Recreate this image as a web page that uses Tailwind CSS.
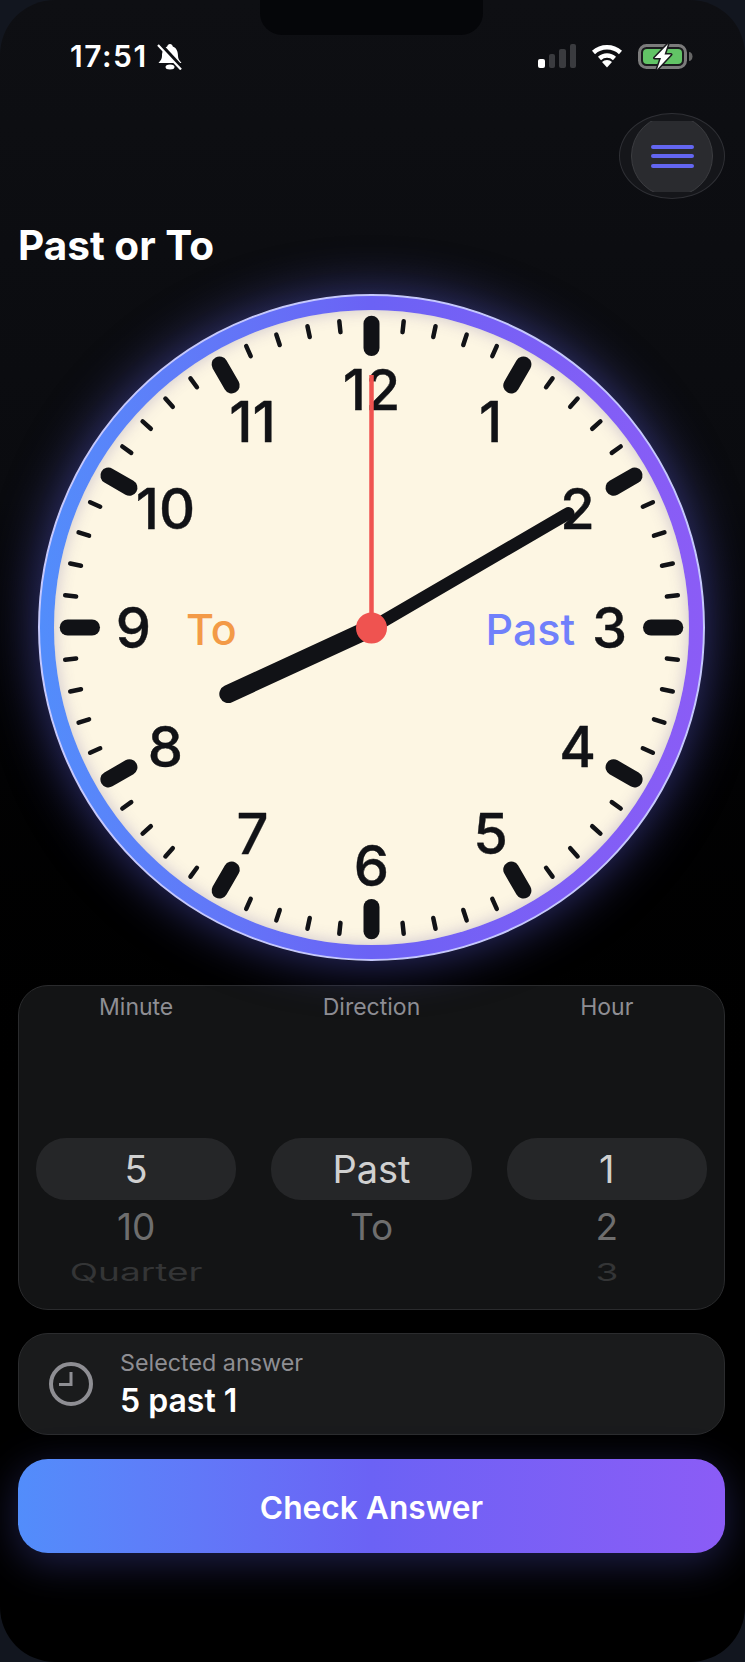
<!DOCTYPE html>
<html lang="en">
<head>
    <meta charset="UTF-8">
    <meta name="viewport" content="width=device-width, initial-scale=1.0">
    <title>Past or To</title>
    <script src="https://cdn.jsdelivr.net/npm/@tailwindcss/browser@4"></script>
</head>
<body class="bg-[#12161f] font-[Inter,sans-serif]">
    <div class="relative w-[745px] h-[1662px] overflow-hidden rounded-[55px] bg-linear-to-b from-[#0e0f13] via-[#0a0b0f] via-30% to-black to-70% pl-[18px] pr-[20px]">
        <!-- Notch -->
        <div class="absolute left-[260px] top-0 w-[223px] h-[35px] rounded-b-[22px] bg-[#050609]"></div>

        <!-- Status bar -->
        <div class="flex justify-between items-center h-[28px] mt-[42px] pl-[52px] pr-[32px]">
            <div class="flex items-center gap-[9px]">
                <span class="text-[30px] leading-none font-semibold tracking-[1.5px] text-white">17:51</span>
                <svg class="w-[26px] h-[27px]" viewBox="0 0 26 27">
                    <path fill="#fff" d="M13 1c1.500 0 2.500 1 2.800 2.400C20 5 21 9 21 13c0 3 1.500 4.500 3.500 7H1.500C3.500 17.500 5 16 5 13c0-4 1-8 5.200-9.600C10.500 2 11.500 1 13 1z"/>
                    <ellipse cx="13" cy="24" rx="4.500" ry="2.500" fill="#fff"/>
                    <path d="M2.500 0.500l23 25" stroke="#0d0e12" stroke-width="4"/>
                    <path d="M1 2l23 24.500" stroke="#fff" stroke-width="2.200"/>
                </svg>
            </div>
            <div class="flex items-center">
                <div class="flex items-end gap-[4px] h-[24px]">
                    <div class="w-[6.500px] h-[9px] rounded-[2px] bg-white"></div>
                    <div class="w-[6.500px] h-[14px] rounded-[2px] bg-[#3a3b3f]"></div>
                    <div class="w-[6.500px] h-[19px] rounded-[2px] bg-[#3a3b3f]"></div>
                    <div class="w-[6.500px] h-[24px] rounded-[2px] bg-[#3a3b3f]"></div>
                </div>
                <svg class="ml-[15px] w-[32px] h-[24px]" viewBox="0 0 32 24" fill="none" stroke="#fff">
                    <path stroke-width="4.500" d="M2.500 8.500A20 20 0 0 1 29.500 8.500"/>
                    <path stroke-width="4.500" d="M8.500 14.500A11 11 0 0 1 23.500 14.500"/>
                    <path fill="#fff" stroke="none" d="M16 23.500L11 18A7 7 0 0 1 21 18Z"/>
                </svg>
                <svg class="ml-[15px] w-[55px] h-[27px]" viewBox="0 0 55 27">
                    <rect x="1.500" y="2.500" width="46" height="22" rx="7" fill="#1a1b1d" stroke="#7b7b7b" stroke-width="3"/>
                    <rect x="5" y="6" width="39" height="15" rx="4" fill="#62c466"/>
                    <path d="M51 9c2 0 3.500 2 3.500 4.500S53 18 51 18z" fill="#666"/>
                    <path d="M30 1L16.500 15H23L19 26.500L33 11.500H26.500Z" fill="#fff" stroke="#1a1b1d" stroke-width="3" stroke-linejoin="round" paint-order="stroke"/>
                </svg>
            </div>
        </div>

        <!-- Menu button -->
        <div class="flex justify-end mt-[43px]">
            <button class="flex items-center justify-center w-[106px] h-[86px] rounded-[50%] border border-[#2f3035] bg-[#15161a]">
                <div class="flex items-center justify-center w-[84px] h-[71px] overflow-hidden">
                    <div class="flex flex-col items-center justify-center gap-[5.500px] w-[82px] h-[82px] shrink-0 rounded-full border border-[#3c3d41] bg-[#2a2b2f]">
                        <div class="w-[43px] h-[4px] rounded-full bg-[#6366f1]"></div>
                        <div class="w-[43px] h-[4px] rounded-full bg-[#6366f1]"></div>
                        <div class="w-[43px] h-[4px] rounded-full bg-[#6366f1]"></div>
                    </div>
                </div>
            </button>
        </div>

        <h1 class="mt-[23px] text-[40.500px] leading-[48px] font-bold text-white">Past or To</h1>

        <!-- Clock -->
        <div class="relative ml-[20px] mt-[24px] w-[667px] h-[667px] p-[14px] rounded-full border-2 border-[#c5c8fd] bg-linear-to-r from-[#528dfb] via-[#6b62f5] to-[#8b5cf6] shadow-[0_0_50px_rgba(99,102,241,0.5)]">
            <div class="w-full h-full rounded-full bg-[#fdf6e3] shadow-[inset_0_0_16px_rgba(90,80,160,0.3)]"></div>
            <svg id="dial" class="absolute -left-[2px] -top-[2px] w-[667px] h-[667px]" viewBox="0 0 667 667">
                <text x="148" y="351" font-size="43" font-weight="550" fill="#f39a47">To</text>
                <text x="447.500" y="351" font-size="43" font-weight="550" fill="#7080fb">Past</text>
                <line x1="333.500" y1="334" x2="190.300" y2="400" stroke="#111216" stroke-width="18" stroke-linecap="round"/>
                <line x1="333.500" y1="334" x2="530.300" y2="219.300" stroke="#111216" stroke-width="12.500" stroke-linecap="round"/>
                <line x1="333.500" y1="334" x2="333.500" y2="81" stroke="#ef5350" stroke-width="4.500"/>
                <circle cx="333.500" cy="334" r="15.500" fill="#ef5350"/>
            </svg>
        </div>

        <!-- Picker -->
        <div class="mt-[24px] h-[325px] px-[17px] pt-[6px] rounded-[30px] border border-[#2a2b2d] bg-[#131415]">
            <div class="grid grid-cols-3 gap-[35px] text-center">
                <div>
                    <div class="h-[30px] leading-[30px] text-[23px] text-[#8e8e93]">Minute</div>
                    <div class="mt-[116px] h-[62px] leading-[62px] rounded-[30px] bg-[#252628] text-[38px] text-[#d0d0d0]">5</div>
                    <div class="h-[54px] leading-[54px] text-[37px] text-[#6e6e6e]">10</div>
                    <div class="h-[38px] leading-[36px] text-[37px] text-[#343536] scale-y-[0.65]">Quarter</div>
                </div>
                <div>
                    <div class="h-[30px] leading-[30px] text-[23px] text-[#8e8e93]">Direction</div>
                    <div class="mt-[116px] h-[62px] leading-[62px] rounded-[30px] bg-[#252628] text-[38px] text-[#d0d0d0]">Past</div>
                    <div class="h-[54px] leading-[54px] text-[37px] text-[#6e6e6e]">To</div>
                </div>
                <div>
                    <div class="h-[30px] leading-[30px] text-[23px] text-[#8e8e93]">Hour</div>
                    <div class="mt-[116px] h-[62px] leading-[62px] rounded-[30px] bg-[#252628] text-[38px] text-[#d0d0d0]">1</div>
                    <div class="h-[54px] leading-[54px] text-[37px] text-[#6e6e6e]">2</div>
                    <div class="h-[38px] leading-[36px] text-[37px] text-[#343536] scale-y-[0.65]">3</div>
                </div>
            </div>
        </div>

        <!-- Selected answer -->
        <div class="flex items-center h-[102px] mt-[23px] pl-[30px] rounded-[30px] border border-[#2b2c2e] bg-[#1a1b1c]">
            <svg class="w-[44px] h-[44px]" viewBox="0 0 44 44" fill="none" stroke="#8e8e93" stroke-width="4">
                <circle cx="22" cy="22" r="20"/>
                <path stroke-width="3" d="M22 10V22.500H10"/>
            </svg>
            <div class="ml-[27px]">
                <div class="text-[23.300px] leading-[30px] text-[#8e8e93]">Selected answer</div>
                <div class="text-[32px] leading-[40px] mt-[3px] font-semibold text-white">5 past 1</div>
            </div>
        </div>

        <button class="block w-full h-[94px] mt-[24px] pt-[3px] rounded-[30px] bg-linear-to-r from-[#528dfb] via-[#6b62f5] to-[#8b5cf6] text-[31.700px] font-semibold text-white shadow-[0_10px_40px_rgba(99,102,241,0.3)]">Check Answer</button>
    </div>

    <script>
        const svgNS = 'http://www.w3.org/2000/svg';
        const dial = document.getElementById('dial');
        const firstChild = dial.firstChild;
        const cx = 333.5, cy = 333.5;

        // Minute and hour ticks
        for (let i = 0; i < 60; i++) {
            const a = i * Math.PI / 30;
            const major = i % 5 === 0;
            const r1 = major ? 303.8 : 308;
            const r2 = major ? 279.5 : 297;
            const line = document.createElementNS(svgNS, 'line');
            line.setAttribute('x1', cx + r1 * Math.sin(a));
            line.setAttribute('y1', cy - r1 * Math.cos(a));
            line.setAttribute('x2', cx + r2 * Math.sin(a));
            line.setAttribute('y2', cy - r2 * Math.cos(a));
            line.setAttribute('stroke', '#111216');
            line.setAttribute('stroke-width', major ? 16 : 4.5);
            line.setAttribute('stroke-linecap', 'round');
            dial.insertBefore(line, firstChild);
        }

        // Clock numbers
        for (let n = 1; n <= 12; n++) {
            const a = n * Math.PI / 6;
            const text = document.createElementNS(svgNS, 'text');
            text.setAttribute('x', cx + 238 * Math.sin(a));
            text.setAttribute('y', cy - 238 * Math.cos(a) + 20.5);
            text.setAttribute('font-size', 56);
            text.setAttribute('font-weight', 500);
            text.setAttribute('text-anchor', 'middle');
            text.setAttribute('fill', '#111216');
            text.setAttribute('stroke', '#111216');
            text.setAttribute('stroke-width', 0.4);
            text.setAttribute('stroke-linejoin', 'round');
            text.textContent = n;
            dial.insertBefore(text, firstChild);
        }
    </script>
</body>
</html>
